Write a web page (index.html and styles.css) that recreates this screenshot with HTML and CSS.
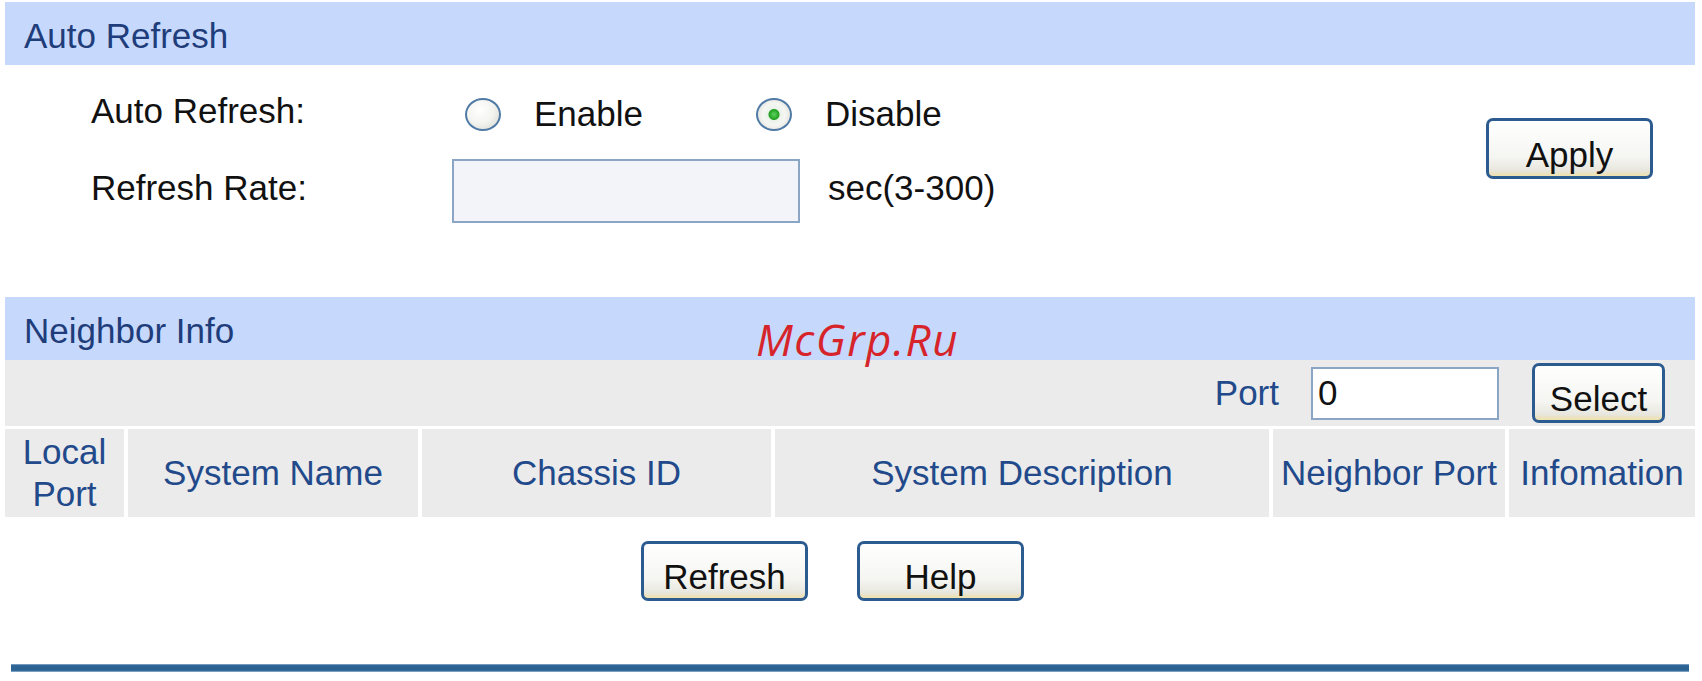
FILE: index.html
```html
<!DOCTYPE html>
<html lang="en">
<head>
    <meta charset="UTF-8">
    <meta name="viewport" content="width=device-width, initial-scale=1.0">
    <title>LLDP Neighbor Info</title>
    <link rel="stylesheet" href="styles.css">
</head>
<body>

    <div class="page">
        <div class="bar">Auto Refresh</div>

        <div class="form">
            <div class="fields">
                <div class="row row-radio">
                    <span class="label">Auto Refresh:</span>
                    <label class="opt"><input type="radio" name="auto" class="radio">Enable</label>
                    <label class="opt"><input type="radio" name="auto" class="radio" checked>Disable</label>
                </div>
                <div class="row row-rate">
                    <span class="label">Refresh Rate:</span>
                    <input type="text" class="field">
                    <span class="unit">sec(3-300)</span>
                </div>
            </div>
            <button class="btn btn-apply">Apply</button>
        </div>

        <div class="bar">Neighbor Info</div>

        <div class="filter">
            <span class="filter-label">Port</span>
            <input type="text" class="port" value="0">
            <button class="btn btn-select">Select</button>
        </div>

        <div class="table-head">
            <div class="cell">Local<br>Port</div>
            <div class="cell">System Name</div>
            <div class="cell">Chassis ID</div>
            <div class="cell">System Description</div>
            <div class="cell">Neighbor Port</div>
            <div class="cell">Infomation</div>
        </div>

        <div class="actions">
            <button class="btn">Refresh</button>
            <button class="btn">Help</button>
        </div>

        <div class="rule"></div>
    </div>

    <span class="watermark">McGrp.Ru</span>

</body>
</html>
```

FILE: styles.css
```css
body {
    margin: 0;
    padding-top: 2px;
    background: #ffffff;
    font-family: "Liberation Sans", Arial, sans-serif;
    font-size: 35px;
    color: #111111;
}
.page {
    margin: 0 7px 0 5px;
}
.bar {
    height: 59px;
    padding: 4px 0 0 19px;
    line-height: 59px;
    background: #c6d9fd;
    color: #1f3d7a;
}

/* auto refresh form */
.form {
    display: flex;
    justify-content: space-between;
    align-items: flex-start;
    padding: 20px 42px 74px 86px;
}
.fields {
    display: flex;
    flex-direction: column;
    gap: 22px;
}
.row {
    display: flex;
    align-items: center;
}
.row-radio {
    height: 52px;
}
.row-rate {
    height: 64px;
}
.row-rate .label,
.unit {
    padding-bottom: 6px;
}
.label {
    width: 361px;
}
.opt {
    display: inline-flex;
    align-items: center;
    gap: 33px;
    width: 291px;
    margin-top: 6px;
}
.opt:first-of-type {
    margin-left: 13px;
}
.radio {
    appearance: none;
    -webkit-appearance: none;
    width: 36px;
    height: 33px;
    margin: 0;
    border: 2px solid #4f7aa6;
    border-radius: 50%;
    background: radial-gradient(circle at 40% 35%, #ffffff 0%, #f3f3ef 50%, #d6d6cf 100%);
    box-sizing: border-box;
}
.radio:checked {
    background: radial-gradient(circle, #5fd35f 0, #22a022 5px, #e9f3e9 6px, #f6f6f3 50%, #d6d6cf 100%);
}
.field {
    width: 348px;
    height: 64px;
    margin: 0 28px 0 0;
    border: 2px solid #8aa6c4;
    background: #f3f4f9;
    box-sizing: border-box;
}

/* buttons */
.btn {
    width: 167px;
    height: 60px;
    padding: 12px 0 0;
    border: 3px solid #2b5b8f;
    border-radius: 7px;
    background: linear-gradient(#ffffff, #f5f5f2 65%, #e3e1d6);
    box-shadow: inset 0 -7px 3px -4px #efe2b2;
    font-family: "Liberation Sans", Arial, sans-serif;
    font-size: 35px;
    color: #111111;
    box-sizing: border-box;
}
.btn-apply {
    height: 61px;
    margin-top: 33px;
}
.btn-select {
    width: 133px;
}

/* neighbor table */
.filter {
    display: flex;
    justify-content: flex-end;
    align-items: center;
    height: 66px;
    padding-right: 30px;
    background: #ebebeb;
    color: #224a8b;
}
.port {
    width: 188px;
    height: 53px;
    margin: 0 33px 0 32px;
    padding: 0 0 0 5px;
    border: 2px solid #8aa6c4;
    background: #ffffff;
    font-family: "Liberation Sans", Arial, sans-serif;
    font-size: 35px;
    color: #111111;
    box-sizing: border-box;
}
.table-head {
    display: grid;
    grid-template-columns: 119px 290px 349px 494px 232px 186px;
    column-gap: 4px;
    margin-top: 3px;
}
.cell {
    display: flex;
    align-items: center;
    justify-content: center;
    height: 88px;
    background: #ebebeb;
    color: #224a8b;
    text-align: center;
    line-height: 42px;
    white-space: nowrap;
}
.actions {
    display: flex;
    justify-content: center;
    gap: 49px;
    margin-top: 24px;
    padding-right: 35px;
}
.rule {
    height: 8px;
    margin: 63px 6px 0;
    background: linear-gradient(#8fb1cf, #2c6393 20%, #2c6393 80%, #9cbad4);
}

.watermark {
    position: absolute;
    left: 756px;
    top: 317px;
    font-family: "Open Sans", "Noto Sans", sans-serif;
    font-style: italic;
    font-size: 44px;
    line-height: 1;
    letter-spacing: 1.5px;
    color: #d6242a;
}
```
